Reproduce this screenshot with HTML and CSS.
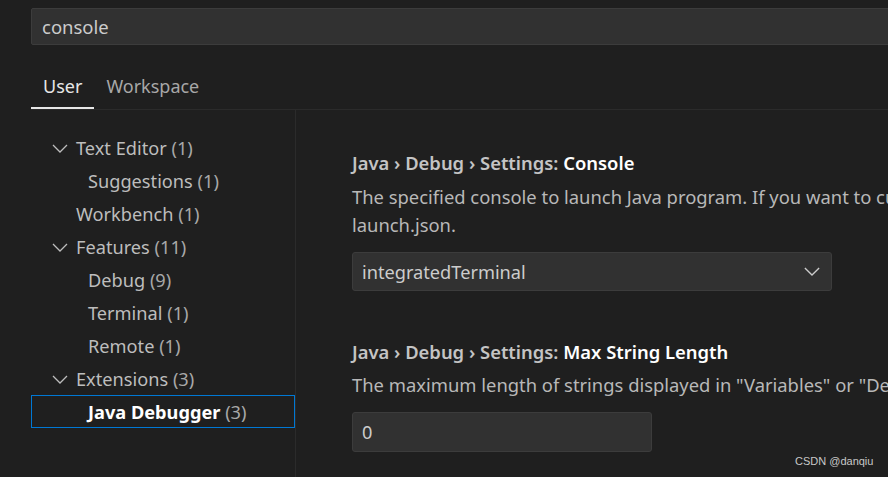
FILE: index.html
```html
<!DOCTYPE html>
<html lang="en">
<head>
<meta charset="utf-8">
<title>Settings</title>
<link rel="stylesheet" href="styles.css">
</head>
<body>
<div class="settings">
  <div class="search"><span class="search-text">console</span></div>
  <div class="tabs">
    <div class="tab active">User</div>
    <div class="tab">Workspace</div>
  </div>
  <div class="body">
    <nav class="toc">
      <div class="row l1"><svg class="chev" viewBox="0 0 16 16"><path d="M1 5 L8 12 L15 5"/></svg><span class="name">Text Editor</span>&nbsp;<span class="count">(1)</span></div>
      <div class="row l2"><span class="name">Suggestions</span>&nbsp;<span class="count">(1)</span></div>
      <div class="row l1 nochev"><span class="name">Workbench</span>&nbsp;<span class="count">(1)</span></div>
      <div class="row l1"><svg class="chev" viewBox="0 0 16 16"><path d="M1 5 L8 12 L15 5"/></svg><span class="name">Features</span>&nbsp;<span class="count">(11)</span></div>
      <div class="row l2"><span class="name">Debug</span>&nbsp;<span class="count">(9)</span></div>
      <div class="row l2"><span class="name">Terminal</span>&nbsp;<span class="count">(1)</span></div>
      <div class="row l2"><span class="name">Remote</span>&nbsp;<span class="count">(1)</span></div>
      <div class="row l1"><svg class="chev" viewBox="0 0 16 16"><path d="M1 5 L8 12 L15 5"/></svg><span class="name">Extensions</span>&nbsp;<span class="count">(3)</span></div>
      <div class="row l2 selected"><span class="name">Java Debugger</span>&nbsp;<span class="count">(3)</span></div>
    </nav>
    <main class="content">
      <section class="setting">
        <div class="title"><span class="cat">Java › Debug › Settings: </span><span class="label">Console</span></div>
        <div class="desc">The specified console to launch Java program. If you want to customize the console for a specific debug session, please modify the 'console' config in<br>launch.json.</div>
        <div class="select"><span>integratedTerminal</span><svg class="select-chev" viewBox="0 0 18 10"><path d="M1 1 L9 9 L17 1"/></svg></div>
      </section>
      <section class="setting second">
        <div class="title"><span class="cat">Java › Debug › Settings: </span><span class="label">Max String Length</span></div>
        <div class="desc">The maximum length of strings displayed in "Variables" or "Debug Console" viewlets, strings longer than this length will be trimmed, if 0 no trim occurs.</div>
        <div class="input">0</div>
      </section>
    </main>
  </div>
  <div class="watermark">CSDN @danqiu</div>
</div>
</body>
</html>
```
FILE: styles.css
```css
html, body {
  margin: 0;
  padding: 0;
  background: #1f1f1f;
  overflow: hidden;
}
.settings {
  position: relative;
  width: 888px;
  height: 477px;
  overflow: hidden;
  font-family: "Noto Sans", "Open Sans", sans-serif;
  color: #cccccc;
}
.search {
  margin: 8px 0 0 31px;
  height: 35px;
  width: 900px;
  background: #313131;
  border: 1px solid #3c3c3c;
  border-radius: 2px;
  display: flex;
  align-items: center;
  padding-left: 10px;
  box-sizing: content-box;
}
.search-text {
  font-size: 18.5px;
  color: #cccccc;
}
.tabs {
  display: flex;
  margin: 19px 0 0 31px;
  border-bottom: 1px solid #2b2b2b;
  height: 45px;
}
.tab {
  padding: 0 12px;
  font-size: 18px;
  color: #a8a8a8;
  display: flex;
  align-items: center;
  height: 43px;
  border-bottom: 2px solid transparent;
}
.tab.active {
  color: #e7e7e7;
  border-bottom-color: #e7e7e7;
}
.body {
  display: flex;
  height: 368px;
}
.toc {
  width: 264px;
  margin-left: 31px;
  padding-top: 21px;
  border-right: 1px solid #2b2b2b;
  flex: none;
}
.row {
  height: 33px;
  display: flex;
  align-items: center;
  font-size: 18.2px;
  color: #bdbdbd;
  box-sizing: border-box;
  white-space: nowrap;
}
.row.l1 { padding-left: 21px; }
.row.l1.nochev { padding-left: 45px; }
.row.l2 { padding-left: 57px; }
.chev {
  width: 16px;
  height: 16px;
  margin-right: 8px;
  fill: none;
  stroke: #bdbdbd;
  stroke-width: 1.3;
}
.row .count { color: #a8a8a8; }
.row.selected {
  border: 1px solid #0078d4;
  padding-left: 56px;
}
.row.selected .name {
  font-weight: 700;
  color: #ffffff;
}
.content {
  flex: 1;
  padding: 41px 0 0 56px;
  min-width: 0;
}
.setting {
  width: 1500px;
}
.title {
  font-size: 18.4px;
  font-weight: 600;
  line-height: 24px;
  white-space: nowrap;
}
.title .cat { color: #c4c4c4; }
.title .label { color: #ffffff; }
.desc {
  margin-top: 8px;
  font-size: 18.4px;
  line-height: 28px;
  color: #b8b8b8;
  white-space: nowrap;
}
.select {
  margin-top: 13px;
  width: 458px;
  height: 37px;
  background: #313131;
  border: 1px solid #3c3c3c;
  border-radius: 3px;
  display: flex;
  align-items: center;
  justify-content: space-between;
  padding: 0 11px 0 9px;
  box-sizing: content-box;
  font-size: 18.2px;
  color: #cccccc;
}
.select-chev {
  width: 16px;
  height: 9px;
  fill: none;
  stroke: #cccccc;
  stroke-width: 1.5;
}
.second {
  margin-top: 49px;
}
.second .desc {
  margin-top: 7px;
}
.input {
  margin-top: 13px;
  width: 289px;
  height: 38px;
  background: #313131;
  border: 1px solid #3c3c3c;
  border-radius: 3px;
  display: flex;
  align-items: center;
  padding-left: 9px;
  box-sizing: content-box;
  font-size: 18.2px;
  color: #cccccc;
}
.watermark {
  position: absolute;
  left: 795px;
  top: 455px;
  font-family: "Liberation Sans", Arial, sans-serif;
  font-size: 11px;
  color: #c8c8c8;
}
```
